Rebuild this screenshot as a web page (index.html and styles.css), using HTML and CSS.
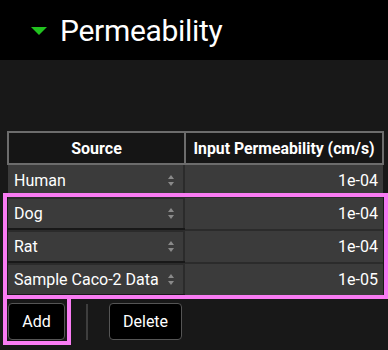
FILE: index.html
```html
<!DOCTYPE html>
<html lang="en">
<head>
    <meta charset="UTF-8">
    <meta name="viewport" content="width=device-width, initial-scale=1.0">
    <title>Permeability</title>
    <link rel="stylesheet" href="styles.css">
</head>
<body>

    <div class="section-header">
        <span class="caret"></span>
        <h1>Permeability</h1>
    </div>

    <div class="panel">
        <div class="table-wrap">
            <table class="perm-table">
                <thead>
                    <tr>
                        <th class="col-source">Source</th>
                        <th class="col-value">Input Permeability (cm/s)</th>
                    </tr>
                </thead>
                <tbody>
                    <tr>
                        <td class="col-source"><span>Human</span><span class="spin"></span></td>
                        <td class="col-value">1e-04</td>
                    </tr>
                    <tr>
                        <td class="col-source"><span>Dog</span><span class="spin"></span></td>
                        <td class="col-value">1e-04</td>
                    </tr>
                    <tr>
                        <td class="col-source"><span>Rat</span><span class="spin"></span></td>
                        <td class="col-value">1e-04</td>
                    </tr>
                    <tr>
                        <td class="col-source"><span>Sample Caco-2 Data</span><span class="spin"></span></td>
                        <td class="col-value">1e-05</td>
                    </tr>
                </tbody>
            </table>
            <div class="highlight rows-highlight"></div>
        </div>

        <div class="actions">
            <div class="add-wrap">
                <button class="btn">Add</button>
                <div class="highlight"></div>
            </div>
            <span class="divider"></span>
            <button class="btn">Delete</button>
        </div>
    </div>

</body>
</html>
```

FILE: styles.css
```css
body {
    margin: 0;
    font-family: Roboto, "Liberation Sans", sans-serif;
    background-color: #181818;
    color: white;
    width: 388px;
    height: 350px;
    overflow: hidden;
}
.section-header {
    height: 60px;
    background-color: #000;
    display: flex;
    align-items: center;
    padding-left: 31px;
    box-sizing: border-box;
}
.caret {
    width: 0;
    height: 0;
    border-left: 8px solid transparent;
    border-right: 8px solid transparent;
    border-top: 8px solid #21c21f;
    margin-right: 13px;
    margin-top: 1px;
}
.section-header h1 {
    margin: 0;
    font-size: 30px;
    font-weight: 400;
    letter-spacing: -0.3px;
}
.panel {
    padding: 71px 0 0 7px;
}
.table-wrap {
    position: relative;
    width: 377px;
}
.perm-table {
    width: 377px;
    border-collapse: collapse;
    table-layout: fixed;
    font-size: 16px;
}
.perm-table th {
    height: 30px;
    background-color: #151515;
    border: 2px solid #6c6c6c;
    font-weight: 700;
    padding: 0;
}
.perm-table th.col-source {
    width: 175px;
}
.perm-table th.col-value {
    font-size: 15.8px;
}
.perm-table td {
    height: 31px;
    background-color: #3b3b3b;
    border-top: 2px solid #2b2b2b;
    padding: 0;
}
.perm-table thead + tbody tr:first-child td {
    border-top: none;
}
.perm-table td.col-source {
    border-right: 2px solid #2b2b2b;
}
.perm-table td.col-source {
    display: flex;
    align-items: center;
    justify-content: space-between;
    padding: 0 8px 0 6px;
    box-sizing: border-box;
}
.perm-table td.col-value {
    text-align: right;
    padding-right: 5px;
}
.spin {
    width: 7px;
    height: 11px;
    position: relative;
}
.spin::before,
.spin::after {
    content: "";
    position: absolute;
    left: 0;
    border-left: 3.5px solid transparent;
    border-right: 3.5px solid transparent;
}
.spin::before {
    top: 0;
    border-bottom: 4px solid #8a8a8a;
}
.spin::after {
    bottom: 0;
    border-top: 4px solid #8a8a8a;
}
.highlight {
    position: absolute;
    border: 4px solid #f97cf3;
    pointer-events: none;
}
.rows-highlight {
    left: -4px;
    right: -4px;
    top: 62px;
    bottom: -4px;
}
.actions {
    display: flex;
    align-items: center;
    margin-top: 8px;
}
.add-wrap {
    position: relative;
}
.add-wrap .highlight {
    left: -4px;
    top: -8px;
    right: -6px;
    bottom: -5px;
}
.btn {
    font-family: Roboto, "Liberation Sans", sans-serif;
    font-size: 16px;
    color: white;
    background-color: #000;
    border: 1px solid #555;
    border-radius: 4px;
    height: 37px;
    padding: 0 13px;
    cursor: pointer;
}
.add-wrap .btn {
    width: 57px;
    margin-left: 1px;
}
.divider {
    width: 2px;
    height: 36px;
    background-color: #3e3e3e;
    margin: 0 21px;
}
```
